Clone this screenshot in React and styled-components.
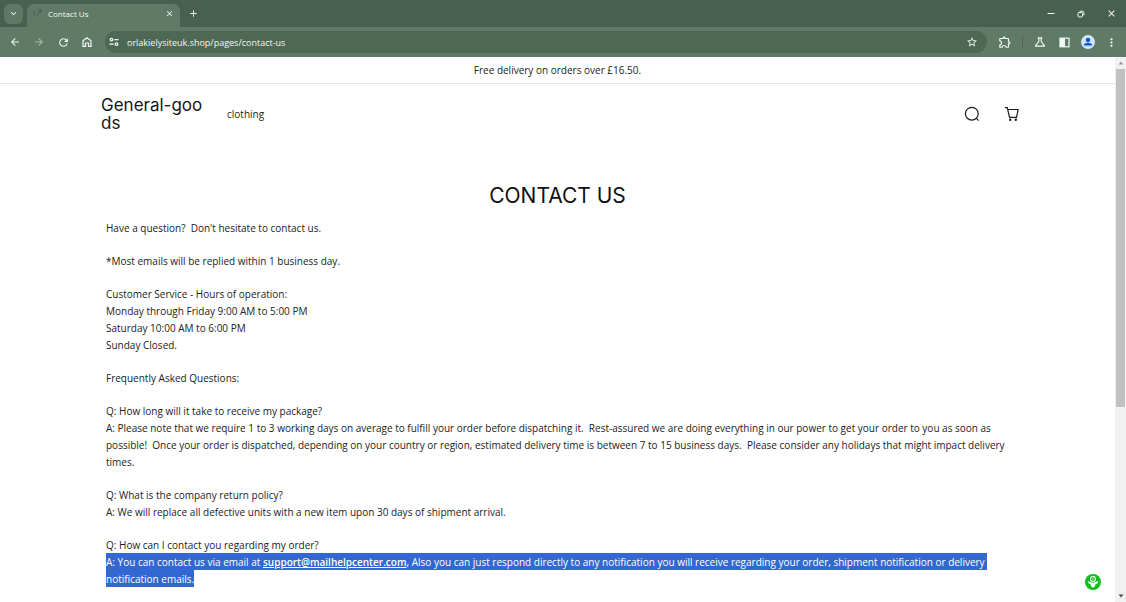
import React from "react";
import styled, { createGlobalStyle } from "styled-components";
import {
  MdArrowBack,
  MdArrowForward,
  MdRefresh,
  MdStarBorder,
  MdOutlineExtension,
  MdOutlineScience,
  MdMoreVert,
  MdClose,
  MdAdd,
  MdKeyboardArrowDown,
} from "react-icons/md";

const GlobalStyle = createGlobalStyle`
  * { box-sizing: border-box; }
  body { margin: 0; background: #fff; }
  button { border: 0; padding: 0; background: none; color: inherit; font: inherit; }
  h1, p { margin: 0; font-weight: 400; }
`;

const Browser = styled.div`
  display: flex;
  flex-direction: column;
  height: 100vh;
  overflow: hidden;
  font-family: "Open Sans", "Noto Sans", sans-serif;
`;

const TabStrip = styled.div`
  display: flex;
  align-items: center;
  flex: none;
  height: 27px;
  padding-left: 4px;
  background: #48604f;
  color: #f2f8f3;
`;

const IconButton = styled.button`
  display: flex;
  align-items: center;
  justify-content: center;
  flex: none;
  width: ${(p) => p.$width || 24}px;
  height: 20px;
  border-radius: 6px;
  background: ${(p) => (p.$filled ? "#5d7865" : "transparent")};
  opacity: ${(p) => (p.$dim ? 0.5 : 1)};
`;

const Tab = styled.div`
  display: flex;
  align-items: center;
  align-self: flex-end;
  width: 153px;
  height: 23px;
  margin-left: 4px;
  padding: 0 5px 4px 6px;
  gap: 6px;
  border-radius: 7px 7px 0 0;
  background: #5f7b67;
  font-size: 8px;
`;

const TabTitle = styled.span`
  flex: 1;
`;

const WindowControls = styled.div`
  display: flex;
  margin-left: auto;
`;

const Toolbar = styled.div`
  display: flex;
  align-items: center;
  flex: none;
  height: 30px;
  padding: 0 4px 0 3px;
  background: #5f7b67;
  color: #f2f8f3;
`;

const AddressBar = styled.label`
  display: flex;
  align-items: center;
  flex: 1;
  height: 22px;
  margin: 0 6px 0 6px;
  padding: 0 3px 0 3px;
  gap: 7px;
  border-radius: 11px;
  background: #4e6856;
`;

const SiteBadge = styled.span`
  display: flex;
  align-items: center;
  justify-content: center;
  width: 12px;
  height: 16px;
`;

const AddressInput = styled.input`
  flex: 1;
  min-width: 0;
  border: 0;
  padding: 0;
  background: none;
  color: #f2f8f3;
  font: 9px "Open Sans", "Noto Sans", sans-serif;
`;

const Divider = styled.span`
  width: 1px;
  height: 12px;
  margin: 0 5px;
  background: #4e6856;
`;

const Viewport = styled.div`
  display: flex;
  flex: 1;
  min-height: 0;
`;

const Page = styled.div`
  flex: 1;
  min-width: 0;
  overflow: hidden;
  background: #fff;
  color: #222;
  font-family: "Open Sans", Inter, sans-serif;
  font-size: 10px;
  line-height: 17px;
`;

const Announcement = styled.p`
  padding: 5px 0 4px;
  border-bottom: 1px solid #e8e8e8;
  text-align: center;
`;

const StoreHeader = styled.header`
  display: flex;
  align-items: center;
  padding: 12px 91px 0 101px;
`;

const StoreName = styled.a`
  width: 104px;
  color: #161616;
  font-family: Inter, sans-serif;
  font-size: 17px;
  line-height: 18px;
  text-decoration: none;
  word-break: break-all;
`;

const Nav = styled.nav`
  flex: 1;
  margin-left: 22px;
`;

const NavLink = styled.a`
  color: #222;
  text-decoration: none;
`;

const HeaderActions = styled.div`
  display: flex;
  gap: 16px;
`;

const Article = styled.main`
  padding: 48px 106px 0;
`;

const Title = styled.h1`
  margin-bottom: 8px;
  color: #111;
  font-family: Inter, sans-serif;
  font-size: 21px;
  line-height: 32px;
  text-align: center;
`;

const Paragraph = styled.p`
  margin-bottom: 16px;
  white-space: pre-wrap;
`;

const Highlight = styled.span`
  padding: 2px 0 1px;
  background: #3367d1;
  color: #fff;
  box-decoration-break: clone;
  -webkit-box-decoration-break: clone;
`;

const MailLink = styled.a`
  color: inherit;
  font-weight: 600;
`;

const ScrollTrack = styled.div`
  display: flex;
  flex-direction: column;
  justify-content: space-between;
  flex: none;
  width: 11px;
  background: #f1f1f1;
`;

const ScrollThumb = styled.div`
  height: 62%;
  margin: 0 1px auto;
  background: #c1c1c1;
`;

const ScrollArrow = styled.button`
  display: flex;
  align-items: center;
  justify-content: center;
  height: 12px;
`;

const AssistBadge = styled.button`
  position: fixed;
  right: 25px;
  bottom: 12px;
  display: flex;
`;

const PARAGRAPHS = [
  "Have a question?  Don't hesitate to contact us.",
  "*Most emails will be replied within 1 business day.",
  "Customer Service - Hours of operation:\nMonday through Friday 9:00 AM to 5:00 PM\nSaturday 10:00 AM to 6:00 PM\nSunday Closed.",
  "Frequently Asked Questions:",
  "Q: How long will it take to receive my package?\nA: Please note that we require 1 to 3 working days on average to fulfill your order before dispatching it.  Rest-assured we are doing everything in our power to get your order to you as soon as possible!  Once your order is dispatched, depending on your country or region, estimated delivery time is between 7 to 15 business days.  Please consider any holidays that might impact delivery times.",
  "Q: What is the company return policy?\nA: We will replace all defective units with a new item upon 30 days of shipment arrival.",
];

const HomeIcon = () => (
  <svg width="12" height="12" viewBox="0 0 12 12" fill="none" stroke="currentColor" strokeWidth="1.2">
    <path d="M2 4.8 6 1.7l4 3.1v5.5H7.5V7h-3v3.3H2z" />
  </svg>
);

const TuneIcon = () => (
  <svg width="10" height="10" viewBox="0 0 10 10" fill="none" stroke="currentColor" strokeWidth="1.2">
    <circle cx="2.5" cy="2.6" r="1.3" />
    <path d="M5.3 2.6H9.5M.5 7.2h4.2" />
    <circle cx="7.5" cy="7.2" r="1.3" />
  </svg>
);

const FaviconIcon = () => (
  <svg width="9" height="9" viewBox="0 0 9 9" fill="none" stroke="#4d5b59" strokeWidth="1">
    <path d="M1 1.500v5M3 7.500 7.500 2M5 1h3v3" />
  </svg>
);

const SidePanelIcon = () => (
  <svg width="11" height="11" viewBox="0 0 11 11">
    <rect x="1" y="1.2" width="9" height="8.6" fill="none" stroke="currentColor" strokeWidth="1.2" />
    <path d="M1 1.2h5v8.6H1z" fill="currentColor" />
  </svg>
);

const ProfileIcon = () => (
  <svg width="14" height="14" viewBox="0 0 14 14">
    <circle cx="7" cy="7" r="7" fill="#d3e3fd" />
    <circle cx="7" cy="5" r="2.2" fill="#0b57d0" />
    <path d="M2.8 10.5c0-1.9 2-2.8 4.2-2.8s4.2.9 4.2 2.8z" fill="#0b57d0" />
  </svg>
);

const MinimizeIcon = () => (
  <svg width="8" height="8" viewBox="0 0 8 8" stroke="currentColor">
    <path d="M.5 3.500h7" />
  </svg>
);

const RestoreIcon = () => (
  <svg width="8" height="8" viewBox="0 0 8 8" fill="none" stroke="currentColor">
    <rect x="1" y="2.5" width="4.5" height="4.5" rx="1" />
    <path d="M2.7 1.2h2.6a1.6 1.6 0 0 1 1.6 1.6v2.5" />
  </svg>
);

const SearchIcon = () => (
  <svg width="16" height="16" viewBox="0 0 16 16" fill="none" stroke="#1c1c1c" strokeWidth="1.2">
    <circle cx="7.8" cy="7.7" r="6.4" />
    <path d="m12.3 12.2 2.3 2.4" />
  </svg>
);

const CartIcon = () => (
  <svg width="16" height="16" viewBox="0 0 16 16" fill="none" stroke="#1c1c1c" strokeWidth="1.2">
    <path d="M.8 1.6h2.5l2.2 9.7h7l1.6-7.8H3.8" />
    <circle cx="6.2" cy="13.8" r=".6" fill="#1c1c1c" />
    <circle cx="11.8" cy="13.8" r=".6" fill="#1c1c1c" />
  </svg>
);

const AssistIcon = () => (
  <svg width="16" height="16" viewBox="0 0 16 16">
    <circle cx="8" cy="8" r="8" fill="#0fbf1c" />
    <circle cx="8" cy="5" r="2.5" fill="none" stroke="#fff" strokeWidth="1.100" />
    <circle cx="8" cy="5" r=".7" fill="#fff" />
    <path d="M2.800 7.300C4.600 7 5.700 8.700 8 8.700s3.400-1.700 5.200-1.400c-.2 1.900-1.300 2.700-2.800 3C10.200 12.300 9.300 13.500 8 13.500s-2.200-1.200-2.400-3.200c-1.500-.3-2.600-1.100-2.800-3z" fill="#fff" />
  </svg>
);

const Arrow = ({ down }) => (
  <svg width="6" height="4" viewBox="0 0 6 4">
    <path d={down ? "M.5.5h5L3 3.500z" : "M.5 3.500h5L3 .5z"} fill={down ? "#4c4c4c" : "#9a9a9a"} />
  </svg>
);

export default function App() {
  return (
    <Browser>
      <GlobalStyle />
      <TabStrip>
        <IconButton $width={19} $filled aria-label="Search tabs"><MdKeyboardArrowDown size={11} /></IconButton>
        <Tab>
          <FaviconIcon />
          <TabTitle>Contact Us</TabTitle>
          <IconButton $width={12} aria-label="Close tab"><MdClose size={9} /></IconButton>
        </Tab>
        <IconButton $width={26} aria-label="New tab"><MdAdd size={11} /></IconButton>
        <WindowControls>
          <IconButton $width={30} aria-label="Minimize"><MinimizeIcon /></IconButton>
          <IconButton $width={30} aria-label="Restore"><RestoreIcon /></IconButton>
          <IconButton $width={30} aria-label="Close window"><MdClose size={11} /></IconButton>
        </WindowControls>
      </TabStrip>
      <Toolbar>
        <IconButton aria-label="Back"><MdArrowBack size={12} /></IconButton>
        <IconButton $dim aria-label="Forward"><MdArrowForward size={12} /></IconButton>
        <IconButton aria-label="Reload"><MdRefresh size={13} /></IconButton>
        <IconButton aria-label="Home"><HomeIcon /></IconButton>
        <AddressBar>
          <SiteBadge><TuneIcon /></SiteBadge>
          <AddressInput aria-label="Address" defaultValue="orlakielysiteuk.shop/pages/contact-us" />
          <IconButton aria-label="Bookmark"><MdStarBorder size={12} /></IconButton>
        </AddressBar>
        <IconButton aria-label="Extensions"><MdOutlineExtension size={14} /></IconButton>
        <Divider />
        <IconButton aria-label="Labs"><MdOutlineScience size={14} /></IconButton>
        <IconButton aria-label="Side panel"><SidePanelIcon /></IconButton>
        <IconButton aria-label="Profile"><ProfileIcon /></IconButton>
        <IconButton $width={22} aria-label="Menu"><MdMoreVert size={13} /></IconButton>
      </Toolbar>
      <Viewport>
        <Page>
          <Announcement>Free delivery on orders over £16.50.</Announcement>
          <StoreHeader>
            <StoreName href="#home">General-goods</StoreName>
            <Nav><NavLink href="#clothing">clothing</NavLink></Nav>
            <HeaderActions>
              <IconButton aria-label="Search"><SearchIcon /></IconButton>
              <IconButton aria-label="Cart"><CartIcon /></IconButton>
            </HeaderActions>
          </StoreHeader>
          <Article>
            <Title>CONTACT US</Title>
            {PARAGRAPHS.map((text) => (
              <Paragraph key={text}>{text}</Paragraph>
            ))}
            <Paragraph>
              {"Q: How can I contact you regarding my order?\n"}
              <Highlight>
                A: You can contact us via email at{" "}
                <MailLink href="mailto:support@mailhelpcenter.com">support@mailhelpcenter.com</MailLink>
                {", Also you can just respond directly to any notification you will receive regarding your order, shipment notification or delivery "}
                {"notification emails."}
              </Highlight>
            </Paragraph>
          </Article>
        </Page>
        <ScrollTrack>
          <ScrollArrow aria-label="Scroll up"><Arrow /></ScrollArrow>
          <ScrollThumb />
          <ScrollArrow aria-label="Scroll down"><Arrow down /></ScrollArrow>
        </ScrollTrack>
      </Viewport>
      <AssistBadge aria-label="Open assistant"><AssistIcon /></AssistBadge>
    </Browser>
  );
}
